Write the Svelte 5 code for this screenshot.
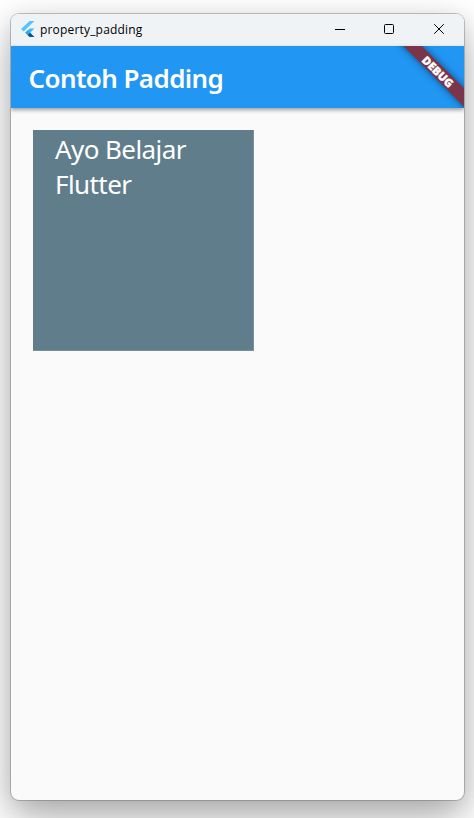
<script>
  const title = 'property_padding';
</script>

<div class="desktop">
  <div class="window">
    <header class="titlebar">
      <svg class="logo" width="14" height="17" viewBox="0 0 14 17">
        <path d="M8.6 0H13.4L2.8 10.4L0 7.9Z" fill="#54c5f8" />
        <path d="M8.6 7.4H13.4L9.1 11.7L13.4 16H8.6L4.3 11.7Z" fill="#45b8f0" />
        <path d="M4.3 11.7L6.7 9.3L9.1 11.7L6.7 14.1Z" fill="#29a5e8" />
        <path d="M6.7 14.1L9.1 11.7L13.4 16H8.6Z" fill="#01579b" />
      </svg>
      <span class="name">{title}</span>
      <div class="controls">
        <svg width="10" height="10" viewBox="0 0 10 10"><path d="M0 5.5H10" /></svg>
        <svg width="10" height="10" viewBox="0 0 10 10"><rect x=".5" y=".5" width="9" height="9" rx="1" /></svg>
        <svg class="close" width="10" height="10" viewBox="0 0 10 10"><path d="M.2 .2L9.8 9.8M9.8 .2L.2 9.8" /></svg>
      </div>
    </header>
    <div class="appbar">
      <h1>Contoh Padding</h1>
      <div class="corner"><span class="banner"><b>DEBUG</b></span></div>
    </div>
    <main>
      <div class="box">
        <span>Ayo Belajar</span>
        <span>Flutter</span>
      </div>
    </main>
  </div>
</div>

<style>
  :global(body) {
    margin: 0;
    overflow: hidden;
  }
  .desktop {
    box-sizing: border-box;
    width: 474px;
    height: 818px;
    padding: 14px 10px 18px 11px;
    background: #fff;
    overflow: hidden;
    font-family: 'Noto Sans', 'Open Sans', sans-serif;
  }
  .window {
    height: 786px;
    display: flex;
    flex-direction: column;
    background: #fafafa;
    border-radius: 8px;
    overflow: hidden;
    box-shadow: 0 0 0 1px rgba(90, 90, 90, 0.35), 0 18px 42px rgba(0, 0, 0, 0.32), 0 2px 20px rgba(0, 0, 0, 0.08);
  }
  .titlebar {
    height: 32px;
    flex: none;
    display: flex;
    align-items: center;
    background: #eff3f5;
  }
  .logo {
    margin: 0 0 1px 9.5px;
  }
  .name {
    margin-left: 5.5px;
    font: 12px/16px 'Open Sans', sans-serif;
    letter-spacing: 0.18px;
    color: #000;
  }
  .controls {
    margin-left: auto;
    margin-right: 20px;
    display: flex;
    gap: 39px;
    padding-bottom: 2px;
  }
  .controls svg {
    fill: none;
    stroke: #000;
    stroke-width: 1;
  }
  .controls .close {
    margin-left: 1px;
  }
  .appbar {
    height: 62px;
    flex: none;
    display: flex;
    align-items: center;
    position: relative;
    z-index: 1;
    background: #2196f3;
    box-shadow: 0 2px 4px rgba(0, 0, 0, 0.38);
  }
  h1 {
    margin: 0 0 0 17.5px;
    padding-top: 1px;
    font-size: 26px;
    line-height: 34px;
    font-weight: 600;
    letter-spacing: -0.6px;
    color: #fff;
    white-space: nowrap;
  }
  .corner {
    position: absolute;
    right: 0;
    top: 0;
    width: 80px;
    height: 62px;
    overflow: hidden;
  }
  .banner {
    position: absolute;
    left: 4.3px;
    top: 19px;
    width: 100px;
    height: 13.2px;
    transform: rotate(45deg);
    background: #7b354a;
    box-shadow: 0 0 7px rgba(0, 0, 0, 0.5);
    display: flex;
    align-items: center;
    justify-content: center;
  }
  b {
    font: 900 11.3px/13px 'Open Sans', sans-serif;
    -webkit-text-stroke: 0.3px #fff;
    color: #fff;
  }
  main {
    padding: 22px;
  }
  .box {
    box-sizing: border-box;
    width: 221px;
    height: 221px;
    padding: 2px 22px;
    display: flex;
    flex-direction: column;
    background: #607d8b;
    border: solid #78909c;
    border-width: 0 1px 1px 0;
    color: #fff;
    font-size: 26px;
    line-height: 35px;
    letter-spacing: -0.58px;
    white-space: nowrap;
  }
</style>
